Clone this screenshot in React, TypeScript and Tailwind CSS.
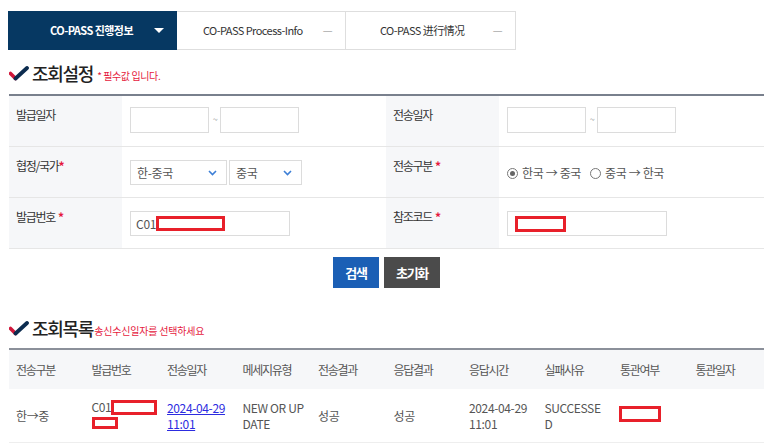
import React from 'react';

const font = { fontFamily: '"Noto Sans CJK KR", "Noto Sans", sans-serif' };

function CheckMark() {
  return (
    <svg width="20" height="15" viewBox="0 0 20 15" className="shrink-0">
      <path d="M1.5 7.5 L6.5 12.5" stroke="#d0173a" strokeWidth="3.6" strokeLinecap="round" />
      <path d="M6.5 12.5 L18 2" stroke="#0c2c4f" strokeWidth="3.8" strokeLinecap="round" />
    </svg>
  );
}

function Redact({ className }: { className: string }) {
  return <span className={`inline-block border-[3px] border-[#e8202a] bg-white ${className}`} />;
}

function Req({ space = false }: { space?: boolean }) {
  return <span className={`text-[#e5193e] font-bold ${space ? 'ml-[3px]' : ''}`}>*</span>;
}

function Chevron() {
  return (
    <svg width="9" height="6" viewBox="0 0 9 6">
      <path d="M1 1 L4.5 4.5 L8 1" stroke="#3d7fd6" strokeWidth="1.6" fill="none" />
    </svg>
  );
}

function Radio({ checked, label }: { checked?: boolean; label: string }) {
  return (
    <label className="flex items-center gap-[4px]">
      <span className="w-[11px] h-[11px] rounded-full border border-[#777] flex items-center justify-center bg-white">
        {checked && <span className="w-[5px] h-[5px] rounded-full bg-[#666]" />}
      </span>
      <span>{label}</span>
    </label>
  );
}

function Label({ children }: { children: React.ReactNode }) {
  return (
    <div className="w-[113px] shrink-0 bg-[#f6f7f9] pl-[7px] pt-[11px] text-[12px] leading-[16px] text-[#333]">
      {children}
    </div>
  );
}

function DateRange() {
  return (
    <div className="flex items-center">
      <div className="w-[79px] h-[26px] border border-[#dcdcdc] bg-white" />
      <span className="w-[11px] text-center text-[9px] text-[#999]">~</span>
      <div className="w-[79px] h-[26px] border border-[#dcdcdc] bg-white" />
    </div>
  );
}

const headers = ['전송구분', '발급번호', '전송일자', '메세지유형', '전송결과', '응답결과', '응답시간', '실패사유', '통관여부', '통관일자'];

export default function App() {
  return (
    <div className="w-[773px] h-[446px] overflow-hidden bg-white pl-[9px] pt-[11px] text-[#555] tracking-[-0.08em]" style={font}>
      {/* tabs */}
      <div className="flex h-[39px] ml-[-1px] text-[11px] tracking-[-0.05em]">
        <div className="w-[169px] bg-[#063862] text-white font-bold flex items-center relative">
          <span className="ml-[42px]">CO-PASS 진행정보</span>
          <span className="absolute left-[146px] top-[17px] w-0 h-0 border-l-[5px] border-r-[5px] border-t-[5px] border-l-transparent border-r-transparent border-t-white" />
        </div>
        <div className="w-[169px] border border-l-0 border-[#dedede] text-[#333] flex items-center relative">
          <span className="ml-[26px]">CO-PASS Process-Info</span>
          <span className="absolute right-[13px] text-[#aaa]">—</span>
        </div>
        <div className="w-[170px] border border-l-0 border-[#dedede] text-[#333] flex items-center relative">
          <span className="ml-[34px]">CO-PASS 进行情况</span>
          <span className="absolute right-[13px] text-[#aaa]">—</span>
        </div>
      </div>

      {/* search settings heading */}
      <div className="mt-[14px] h-[20px] flex items-end gap-[3px]">
        <div className="pb-[3px]"><CheckMark /></div>
        <span className="text-[18px] leading-[22px] font-medium text-[#222]">조회설정</span>
        <span className="text-[10px] leading-[14px] text-[#e5193e] mb-[1px] ml-[1px] tracking-[-0.04em]">* 필수값 입니다.</span>
      </div>

      {/* form */}
      <div className="mt-[10px] w-[755px] border-t-2 border-[#79808d]">
        <div className="flex h-[51px] border-b border-[#e6e6e6]">
          <Label>발급일자</Label>
          <div className="w-[264px] pl-[8px] pt-[11px]"><DateRange /></div>
          <Label>전송일자</Label>
          <div className="flex-1 pl-[8px] pt-[11px]"><DateRange /></div>
        </div>
        <div className="flex h-[51px] border-b border-[#e6e6e6]">
          <Label>협정/국가<Req /></Label>
          <div className="w-[264px] pl-[8px] pt-[13px] flex items-start gap-[2px] text-[12px] text-[#555] tracking-[-0.03em]">
            <div className="w-[97px] h-[25px] border border-[#dcdcdc] flex items-center justify-between pl-[6px] pr-[9px]">
              <span>한-중국</span><Chevron />
            </div>
            <div className="w-[73px] h-[25px] border border-[#dcdcdc] flex items-center justify-between pl-[6px] pr-[9px]">
              <span>중국</span><Chevron />
            </div>
          </div>
          <Label>전송구분<Req space /></Label>
          <div className="flex-1 pl-[8px] pt-[18px] flex items-start gap-[9px] text-[12px] leading-[16px] text-[#555] tracking-[-0.03em]">
            <Radio checked label="한국 → 중국" />
            <Radio label="중국 → 한국" />
          </div>
        </div>
        <div className="flex h-[51px] border-b border-[#e6e6e6]">
          <Label>발급번호<Req space /></Label>
          <div className="w-[264px] pl-[8px] pt-[13px]">
            <div className="w-[160px] h-[25px] border border-[#dcdcdc] flex items-center pl-[5px] text-[12px] text-[#555] tracking-[-0.02em]">
              <span>C01</span>
              <Redact className="w-[69px] h-[15px]" />
            </div>
          </div>
          <Label>참조코드<Req space /></Label>
          <div className="flex-1 pl-[8px] pt-[13px]">
            <div className="w-[160px] h-[25px] border border-[#dcdcdc] flex items-center pl-[7px]">
              <Redact className="w-[51px] h-[16px]" />
            </div>
          </div>
        </div>
      </div>

      {/* buttons */}
      <div className="w-[755px] mt-[8px] flex justify-center gap-[5px]">
        <button className="w-[46px] h-[31px] bg-[#1b5fb5] text-white text-[13px] font-bold">검색</button>
        <button className="w-[56px] h-[31px] bg-[#4b4b4b] text-white text-[13px] font-bold">초기화</button>
      </div>

      {/* list heading */}
      <div className="mt-[31px] h-[20px] flex items-end gap-[3px]">
        <div className="pb-[3px]"><CheckMark /></div>
        <span className="text-[18px] leading-[22px] font-medium text-[#222]">조회목록</span>
        <span className="text-[10px] leading-[14px] text-[#e5193e] mb-[1px] ml-[-2px] tracking-[-0.02em]">송신수신일자를 선택하세요</span>
      </div>

      {/* result table */}
      <div className="mt-[9px] w-[755px] border-t-2 border-[#8b909a] text-[12px]">
        <div className="grid grid-cols-10 h-[39px] bg-[#f6f7f9] items-center">
          {headers.map((h) => (
            <div key={h} className="pl-[7px] text-[#555]">{h}</div>
          ))}
        </div>
        <div className="grid grid-cols-10 h-[54px] items-center border-b border-[#eee] leading-[16px] text-[#555] tracking-[-0.03em]">
          <div className="pl-[7px]">한→중</div>
          <div className="pl-[7px]">
            <div className="flex items-center">C01<Redact className="w-[46px] h-[15px]" /></div>
            <div className="mt-[1px]"><Redact className="w-[26px] h-[12px]" /></div>
          </div>
          <div className="pl-[7px]">
            <span className="text-[#2c2ce0] underline"><span className="whitespace-nowrap">2024-04-29</span> 11:01</span>
          </div>
          <div className="pl-[7px]">
            <div className="w-[62px]">NEW OR UP DATE</div>
          </div>
          <div className="pl-[7px]">성공</div>
          <div className="pl-[7px]">성공</div>
          <div className="pl-[7px]"><span className="whitespace-nowrap">2024-04-29</span> 11:01</div>
          <div className="pl-[7px]">
            <div className="w-[58px] break-all">SUCCESSED</div>
          </div>
          <div className="pl-[6px]"><Redact className="w-[42px] h-[16px]" /></div>
          <div className="pl-[7px]" />
        </div>
      </div>
    </div>
  );
}
